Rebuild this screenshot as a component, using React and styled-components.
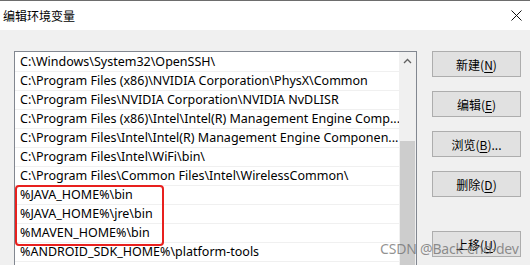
import React from "react";
import styled, { createGlobalStyle } from "styled-components";

const Global = createGlobalStyle`
  html, body { margin: 0; padding: 0; background: #f0f0f0; }
  body { width: 530px; height: 265px; overflow: hidden; font-family: "Noto Sans", "Noto Sans CJK SC", sans-serif; }
`;

const Window = styled.div`
  width: 530px;
  height: 265px;
  display: flex;
  flex-direction: column;
  border-top: 1px solid #6d6d6d;
  box-sizing: border-box;
  overflow: hidden;
  position: relative;
`;

const TitleBar = styled.div`
  height: 29px;
  flex: none;
  background: #ffffff;
  display: flex;
  align-items: center;
  justify-content: space-between;
  padding: 0 8px 0 3px;
`;

const Title = styled.div`
  font-family: "Noto Sans CJK SC", sans-serif;
  font-size: 12px;
  color: #000;
`;

const Body = styled.div`
  flex: 1;
  display: flex;
  gap: 15px;
  padding: 21px 9px 0 14px;
  min-height: 0;
`;

const ListBox = styled.div`
  width: 403px;
  height: 240px;
  box-sizing: border-box;
  border: 1px solid #828790;
  background: #fff;
  display: flex;
  position: relative;
  flex: none;
`;

const Rows = styled.div`
  flex: 1;
  padding-top: 1px;
  overflow: hidden;
`;

const Row = styled.div`
  height: 19px;
  box-sizing: border-box;
  border-bottom: 1px solid #f0f0f0;
  padding-left: 5px;
  font-size: 12.5px;
  line-height: 18px;
  color: #000;
  white-space: nowrap;
  overflow: hidden;
`;

const Scrollbar = styled.div`
  width: 17px;
  background: #f0f0f0;
  display: flex;
  flex-direction: column;
  align-items: center;
`;

const ArrowBox = styled.div`
  width: 17px;
  height: 17px;
  display: flex;
  align-items: center;
  justify-content: center;
`;

const Thumb = styled.div`
  width: 15px;
  margin-top: 72px;
  flex: 1;
  background: #cdcdcd;
`;

const Buttons = styled.div`
  display: flex;
  flex-direction: column;
  gap: 14px;
`;

const Button = styled.div`
  width: 89px;
  height: 26px;
  box-sizing: border-box;
  border: 1px solid #adadad;
  background: #e1e1e1;
  display: flex;
  align-items: center;
  justify-content: center;
  font-family: "Noto Sans CJK SC", sans-serif;
  font-size: 12px;
  color: #000;
  margin-top: ${(p) => (p.$extra ? "20px" : "0")};
`;

const Key = styled.span`
  text-decoration: underline;
  text-underline-offset: 2px;
`;

const Highlight = styled.div`
  position: absolute;
  left: 0px;
  top: 133px;
  width: 149px;
  height: 61px;
  box-sizing: border-box;
  border: 2px solid #e8201e;
  border-radius: 4px;
  pointer-events: none;
`;

const Watermark = styled.div`
  position: absolute;
  left: 380px;
  top: 238px;
  font-family: "Noto Sans", sans-serif;
  font-size: 14px;
  color: rgba(110, 110, 110, 0.75);
  white-space: nowrap;
  letter-spacing: -0.2px;
`;

const rows = [
  "C:\\Windows\\System32\\OpenSSH\\",
  "C:\\Program Files (x86)\\NVIDIA Corporation\\PhysX\\Common",
  "C:\\Program Files\\NVIDIA Corporation\\NVIDIA NvDLISR",
  "C:\\Program Files (x86)\\Intel\\Intel(R) Management Engine Comp...",
  "C:\\Program Files\\Intel\\Intel(R) Management Engine Componen...",
  "C:\\Program Files\\Intel\\WiFi\\bin\\",
  "C:\\Program Files\\Common Files\\Intel\\WirelessCommon\\",
  "%JAVA_HOME%\\bin",
  "%JAVA_HOME%\\jre\\bin",
  "%MAVEN_HOME%\\bin",
  "%ANDROID_SDK_HOME%\\platform-tools",
];

export default function App() {
  return (
    <>
      <Global />
      <Window>
        <TitleBar>
          <Title>编辑环境变量</Title>
          <svg width="11" height="11" viewBox="0 0 11 11">
            <path d="M0.5 0.5 L10.5 10.5 M10.5 0.5 L0.5 10.5" stroke="#111" strokeWidth="1" />
          </svg>
        </TitleBar>
        <Body>
          <ListBox>
            <Rows>
              {rows.map((r) => (
                <Row key={r}>{r}</Row>
              ))}
            </Rows>
            <Scrollbar>
              <ArrowBox>
                <svg width="9" height="6" viewBox="0 0 9 6">
                  <path d="M1 5 L4.5 1.5 L8 5" fill="none" stroke="#606060" strokeWidth="1.3" />
                </svg>
              </ArrowBox>
              <Thumb />
            </Scrollbar>
            <Highlight />
          </ListBox>
          <Buttons>
            <Button>新建(<Key>N</Key>)</Button>
            <Button>编辑(<Key>E</Key>)</Button>
            <Button>浏览(<Key>B</Key>)...</Button>
            <Button>删除(<Key>D</Key>)</Button>
            <Button $extra>上移(<Key>U</Key>)</Button>
          </Buttons>
        </Body>
        <Watermark>CSDN @Back-end-dev</Watermark>
      </Window>
    </>
  );
}
